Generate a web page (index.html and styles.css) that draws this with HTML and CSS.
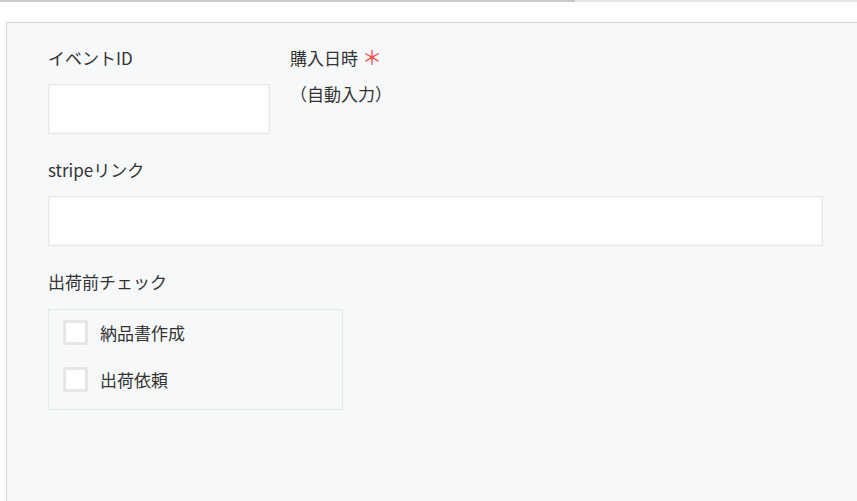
FILE: index.html
```html
<!DOCTYPE html>
<html lang="ja">
<head>
    <meta charset="UTF-8">
    <title>レコード編集</title>
    <link rel="stylesheet" href="styles.css">
</head>
<body>
    <div class="top-bar">
        <span class="bar-seg seg-a"></span>
        <span class="bar-seg seg-b"></span>
        <span class="bar-seg seg-c"></span>
        <span class="bar-seg seg-rest"></span>
    </div>

    <main class="form-panel">
        <div class="form-row">
            <div class="field field-short">
                <label class="field-label">イベントID</label>
                <input class="text-input" type="text">
            </div>
            <div class="field">
                <label class="field-label">購入日時<span class="required">＊</span></label>
                <div class="auto-value">（自動入力）</div>
            </div>
        </div>

        <div class="form-row">
            <div class="field field-wide">
                <label class="field-label">stripeリンク</label>
                <input class="text-input" type="text">
            </div>
        </div>

        <div class="form-row">
            <div class="field">
                <label class="field-label">出荷前チェック</label>
                <div class="check-group">
                    <label class="check-item"><span class="check-box"></span>納品書作成</label>
                    <label class="check-item"><span class="check-box"></span>出荷依頼</label>
                </div>
            </div>
        </div>
    </main>
</body>
</html>
```

FILE: styles.css
```css
* {
    box-sizing: border-box;
}
body {
    margin: 0;
    background: #ffffff;
    font-family: "Noto Sans CJK JP", "Noto Sans", sans-serif;
    color: #333333;
    font-size: 17px;
    overflow: hidden;
}

/* 上部のタブ線 */
.top-bar {
    display: flex;
    height: 2px;
}
.bar-seg { display: block; height: 2px; }
.seg-a { width: 74px; background: #c9cdcd; }
.seg-b { width: 251px; background: #c6cbcb; border-left: 1px solid #d4d7d7; }
.seg-c { width: 250px; background: #c6cbcb; border-left: 1px solid #d4d7d7; }
.seg-rest { flex: 1; background: #e6e6e6; }

/* フォーム本体 */
.form-panel {
    margin: 20px 0 0 6px;
    border-top: 1px solid #d3d5d6;
    border-left: 1px solid #d3d5d6;
    background: #f7f8fa;
    min-height: 490px;
    padding: 23px 34px 0 41px;
}

.form-row {
    display: flex;
    gap: 20px;
    margin-bottom: 24px;
}

.field {
    display: flex;
    flex-direction: column;
}
.field-short { width: 222px; }
.field-wide { flex: 1; }

.field-label {
    display: block;
    line-height: 24px;
    height: 24px;
    margin-bottom: 14px;
    white-space: nowrap;
}

.required {
    color: #ef4a4a;
    font-size: 20px;
    margin-left: 4px;
    line-height: 24px;
    vertical-align: top;
    position: relative;
    top: -1px;
}

.auto-value {
    margin-top: -2px;
    line-height: 24px;
}

.text-input {
    display: block;
    width: 100%;
    height: 50px;
    border: 1px solid #e3e7e8;
    background: #ffffff;
    box-shadow: inset 0 0 4px rgba(0, 0, 0, 0.06);
    outline: none;
    padding: 0 10px;
}

/* チェックボックス */
.check-group {
    width: 295px;
    height: 101px;
    margin-top: 1px;
    border: 1px solid #e3e7e8;
    padding: 10px 14px;
    display: flex;
    flex-direction: column;
    gap: 22px;
}
.check-item {
    display: flex;
    align-items: center;
    gap: 12px;
    height: 25px;
}
.check-box {
    width: 25px;
    height: 25px;
    border: 3px solid #e6e6e6;
    border-radius: 2px;
    background: #ffffff;
}
```
